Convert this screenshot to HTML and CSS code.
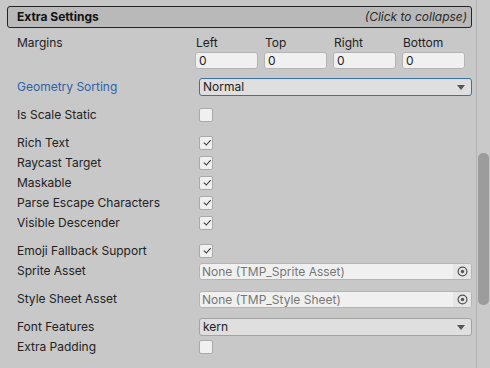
FILE: index.html
```html
<!DOCTYPE html>
<html lang="en">
<head>
    <meta charset="UTF-8">
    <meta name="viewport" content="width=device-width, initial-scale=1.0">
    <title>Extra Settings</title>
    <link rel="stylesheet" href="styles.css">
</head>
<body>
    <div class="panel">
        <div class="inspector">
            <div class="foldout">
                <span class="foldout-title">Extra Settings</span>
                <span class="foldout-hint">(Click to collapse)</span>
            </div>

            <div class="margins">
                <div class="label">Margins</div>
                <div class="margin-grid">
                    <div class="margin-cell">
                        <span class="sub-label">Left</span>
                        <div class="text-field">0</div>
                    </div>
                    <div class="margin-cell">
                        <span class="sub-label">Top</span>
                        <div class="text-field">0</div>
                    </div>
                    <div class="margin-cell">
                        <span class="sub-label">Right</span>
                        <div class="text-field">0</div>
                    </div>
                    <div class="margin-cell">
                        <span class="sub-label">Bottom</span>
                        <div class="text-field">0</div>
                    </div>
                </div>
            </div>

            <div class="row spaced">
                <div class="label label-active">Geometry Sorting</div>
                <div class="dropdown focused">Normal<span class="arrow"></span></div>
            </div>

            <div class="row spaced">
                <div class="label">Is Scale Static</div>
                <div class="checkbox"></div>
            </div>

            <div class="row spaced">
                <div class="label">Rich Text</div>
                <div class="checkbox checked"></div>
            </div>
            <div class="row">
                <div class="label">Raycast Target</div>
                <div class="checkbox checked"></div>
            </div>
            <div class="row">
                <div class="label">Maskable</div>
                <div class="checkbox checked"></div>
            </div>
            <div class="row">
                <div class="label">Parse Escape Characters</div>
                <div class="checkbox checked"></div>
            </div>
            <div class="row">
                <div class="label">Visible Descender</div>
                <div class="checkbox checked"></div>
            </div>

            <div class="row spaced">
                <div class="label">Emoji Fallback Support</div>
                <div class="checkbox checked"></div>
            </div>
            <div class="row">
                <div class="label">Sprite Asset</div>
                <div class="object-field">
                    <span class="object-name">None (TMP_Sprite Asset)</span>
                    <span class="picker">
                        <svg width="11" height="11" viewBox="0 0 11 11"><circle cx="5.5" cy="5.5" r="4.4" fill="none" stroke="#555" stroke-width="1.2"/><circle cx="5.5" cy="5.5" r="1.7" fill="#555"/></svg>
                    </span>
                </div>
            </div>

            <div class="row spaced">
                <div class="label">Style Sheet Asset</div>
                <div class="object-field">
                    <span class="object-name">None (TMP_Style Sheet)</span>
                    <span class="picker">
                        <svg width="11" height="11" viewBox="0 0 11 11"><circle cx="5.5" cy="5.5" r="4.4" fill="none" stroke="#555" stroke-width="1.2"/><circle cx="5.5" cy="5.5" r="1.7" fill="#555"/></svg>
                    </span>
                </div>
            </div>

            <div class="row spaced">
                <div class="label">Font Features</div>
                <div class="dropdown">kern<span class="arrow"></span></div>
            </div>
            <div class="row">
                <div class="label">Extra Padding</div>
                <div class="checkbox"></div>
            </div>
        </div>

        <div class="scrollbar">
            <div class="thumb"></div>
        </div>
    </div>
</body>
</html>
```

FILE: styles.css
```css
* {
    margin: 0;
    padding: 0;
    box-sizing: border-box;
}

body {
    font-family: Inter, "Noto Sans", sans-serif;
    font-size: 12px;
    line-height: 16px;
    color: #222;
    background: #c8c8c8;
    width: 490px;
    height: 368px;
    overflow: hidden;
}

.panel {
    display: flex;
    height: 368px;
}

.inspector {
    flex: 1;
    padding: 6px 4px 0 7px;
}

/* foldout header */
.foldout {
    height: 22px;
    display: flex;
    align-items: center;
    justify-content: space-between;
    padding: 0 4px 0 9px;
    background: #b9b9b9;
    border: 1px solid #242424;
    border-radius: 3px;
}

.foldout-title {
    font-weight: 700;
    color: #111;
}

.foldout-hint {
    font-style: italic;
    color: #2a2a2a;
}

.label {
    width: 192px;
    padding-left: 10px;
    flex-shrink: 0;
}

.label-active {
    color: #2f62a6;
}

/* margins block */
.margins {
    display: flex;
    margin-top: 7px;
}

.margins .label {
    width: 188px;
}

.margin-grid {
    display: grid;
    grid-template-columns: repeat(4, 63px);
    column-gap: 6px;
}

.margin-cell {
    display: flex;
    flex-direction: column;
    gap: 1px;
}

.sub-label {
    padding-left: 1px;
}

.text-field {
    height: 17px;
    line-height: 15px;
    padding-left: 3px;
    background: #f0f0f0;
    border: 1px solid #b4b4b4;
    border-radius: 3px;
}

/* rows */
.row {
    display: flex;
    align-items: center;
    height: 20px;
}

.row.spaced {
    margin-top: 8px;
}

.checkbox {
    width: 14px;
    height: 14px;
    background: #f0f0f0;
    border: 1px solid #a9a9a9;
    border-radius: 2px;
    position: relative;
}

.checkbox.checked::after {
    content: "";
    position: absolute;
    left: 3px;
    top: 2px;
    width: 6px;
    height: 3px;
    border-left: 1.6px solid #333;
    border-bottom: 1.6px solid #333;
    transform: rotate(-48deg) translate(0, 1px);
}

.dropdown {
    flex: 1;
    height: 18px;
    line-height: 16px;
    padding-left: 3px;
    background: #dfdfdf;
    border: 1px solid #a3a3a3;
    border-radius: 3px;
    position: relative;
}

.dropdown.focused {
    border-color: #3a6fb0;
}

.arrow {
    position: absolute;
    right: 6px;
    top: 6px;
    border-left: 4px solid transparent;
    border-right: 4px solid transparent;
    border-top: 5px solid #555;
}

.object-field {
    flex: 1;
    height: 17px;
    display: flex;
    background: #f0f0f0;
    border: 1px solid #b4b4b4;
    border-radius: 3px;
    overflow: hidden;
}

.object-name {
    flex: 1;
    padding-left: 2px;
    line-height: 15px;
    color: #767676;
}

.picker {
    width: 18px;
    display: flex;
    align-items: center;
    justify-content: center;
    background: #e6e6e6;
}

/* scrollbar */
.scrollbar {
    width: 14px;
    border-left: 1px solid #b3b3b3;
    background: #c9c9c9;
    padding: 153px 1px 0 1px;
}

.thumb {
    height: 152px;
    background: #9c9c9c;
    border-radius: 5px;
}
```
